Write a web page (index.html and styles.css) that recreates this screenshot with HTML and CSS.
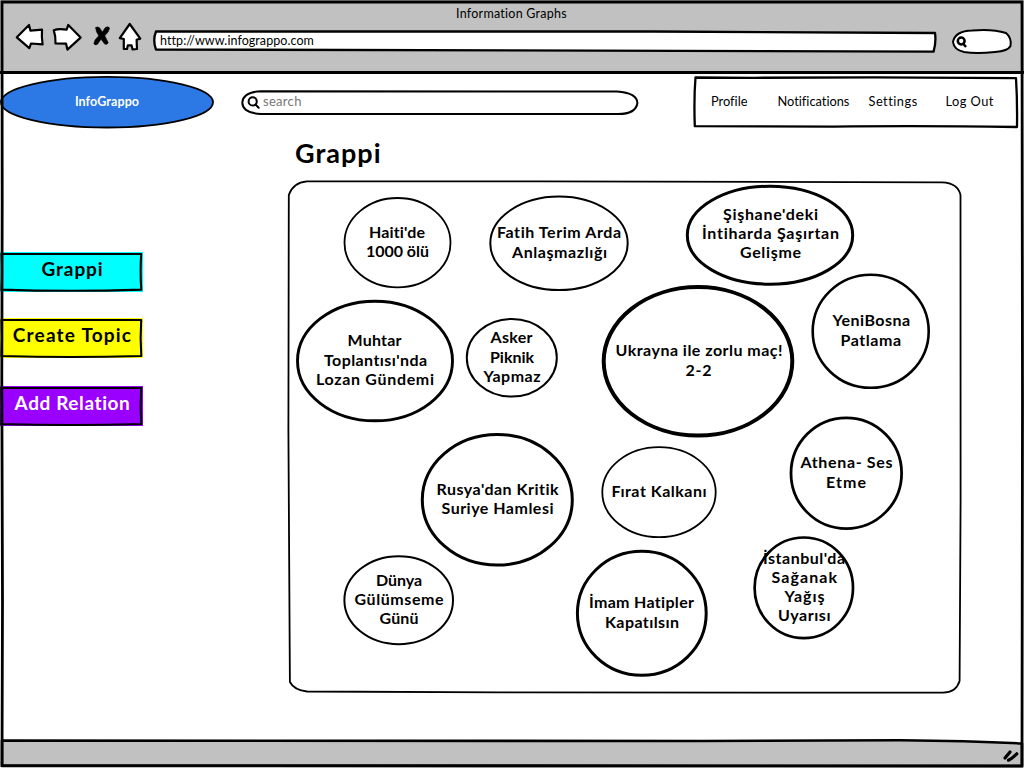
FILE: index.html
```html
<!DOCTYPE html>
<html lang="tr">
<head>
<meta charset="utf-8">
<title>Information Graphs</title>
<link rel="stylesheet" href="styles.css">
</head>
<body>
<div class="window">
  <header class="chrome">
    <div class="window-title">Information Graphs</div>
    <div class="toolbar">
      <svg class="nav-icons" width="130" height="32" viewBox="14 21 130 32">
        <path d="M16.8 37.3 L29 25 L30.4 30.6 L42 29.7 Q41.5 37 42.6 44.3 L31 43.5 L29.3 48.2 Z"/>
        <path d="M53.8 30.3 Q58 28.5 66.6 29.6 L68.3 25 L80.6 37.6 L67.4 49.6 L66 43.6 L55.5 43.4 Q55.8 36 53.8 30.3 Z"/>
        <path class="solid" d="M95.5 27.5 Q98 26 100 28.2 L102.3 32 L105.3 27.5 Q108 25.8 109.7 28 Q109 32 104.8 35.7 L108.3 42.8 Q107 45.2 104.6 44 L101 39.2 L97.5 44.3 Q95 46 93.8 43.4 Q94.5 39.5 98.7 35.8 Q95.8 31.5 95.5 27.5 Z"/>
        <path d="M119.8 38.2 L129.7 24 L140.3 38.6 L136.6 39.8 L137 49 L132.6 49.4 L131.6 45.4 L127.8 45.4 L127 49 L123.8 49 L123.8 39 Z"/>
      </svg>
      <div class="address">
        <svg class="sketch" viewBox="0 0 784 22"><path d="M3 1.5 Q300 .5 500 1.5 T782 3 Q783.3 12 780.6 21.6 Q400 20.5 3 19.5 Q-.5 10 3 1.5 Z"/></svg>
        <span class="address-text">http://www.infograppo.com</span>
      </div>
      <div class="quick-search">
        <svg class="sketch" viewBox="0 0 60 26"><path d="M1 13 Q3 2 20 1.5 Q40 -.5 54 4 Q60 9 58.5 17 Q56 22 43 23 Q24 25 12 23 Q2 21 1 13 Z"/><circle class="line" cx="9.2" cy="12" r="3.4"/><path class="line" d="M11 14.5 L14 18"/></svg>
      </div>
    </div>
  </header>

  <section class="page">
    <div class="topbar">
      <div class="brand">
        <svg class="sketch" viewBox="0 0 214 54"><ellipse cx="107" cy="27.2" rx="106" ry="25.3"/></svg>
        <span>InfoGrappo</span>
      </div>
      <div class="search">
        <svg class="sketch" viewBox="0 0 398 26"><path d="M20 1.3 Q210 1 376 1.6 Q396 3 396.4 13 Q395 24 377 24 L20 24 Q1.4 23 1.3 12.5 Q2 2 20 1.3 Z"/></svg>
        <svg class="magnifier" width="14" height="14" viewBox="0 0 14 14"><circle cx="5.7" cy="5.4" r="4.1"/><path d="M8.5 8.5 L11.7 11.8"/></svg>
        <span>search</span>
      </div>
      <nav class="menu">
        <svg class="sketch" viewBox="0 0 324 52"><path d="M1.5 1.5 L60 1.8 L180 1.3 L322 2.2 Q323.4 24 323 51 Q220 49.6 140 50.7 L.8 50.2 Q-.2 22 1.5 1.5 Z"/></svg>
        <a class="m-profile">Profile</a><a class="m-notifications">Notifications</a><a class="m-settings">Settings</a><a class="m-logout">Log Out</a>
      </nav>
    </div>

    <div class="body">
      <aside class="actions">
        <div class="action cyan"><svg class="sketch" viewBox="0 0 143 40"><path d="M1.5 2 L141.2 2 Q140 20 141.3 37.6 Q70 40 1.5 37.6 Q2.6 20 1.5 2 Z"/></svg><span class="a-grappi">Grappi</span></div>
        <div class="action yellow"><svg class="sketch" viewBox="0 0 143 40"><path d="M1.5 2 L141.2 2 Q140 20 141.3 38 Q70 40 1.5 38 Q2.6 20 1.5 2 Z"/></svg><span class="a-create">Create Topic</span></div>
        <div class="action purple"><svg class="sketch" viewBox="0 0 143 40"><path d="M1.5 2 L141.2 2 Q140 20 141.3 38 Q70 40 1.5 38 Q2.6 20 1.5 2 Z"/></svg><span class="a-add">Add Relation</span></div>
      </aside>
      <main class="board">
        <h1>Grappi</h1>
        <svg class="graph" width="676" height="516" viewBox="287 179 676 516">
          <path class="frame" d="M307 181.3 L540 181.3 L942 182.3 Q958 183 960.5 195 L960.6 500 L959.6 681 Q956 692.5 943 692.7 L500 692.3 L307 691.5 Q294 690 289.9 682 L288.4 430 L288.8 195 Q293 182.5 307 181.3 Z"/>
          <g class="topic">
            <ellipse cx="397.5" cy="242.7" rx="53" ry="44.7" stroke-width="1.8"/>
            <text x="369" y="237.5" textLength="56">Haiti'de</text>
            <text x="366" y="256.8" textLength="63">1000 ölü</text>
          </g>
          <g class="topic">
            <ellipse cx="559" cy="243.3" rx="68.7" ry="46.7" stroke-width="2"/>
            <text x="497" y="237.5" textLength="124">Fatih Terim Arda</text>
            <text x="512" y="257.5" textLength="95">Anlaşmazlığı</text>
          </g>
          <g class="topic">
            <ellipse cx="770" cy="235.2" rx="82.7" ry="49" stroke-width="3"/>
            <text x="723" y="220.2" textLength="95">Şişhane'deki</text>
            <text x="702" y="239.3" textLength="137">İntiharda Şaşırtan</text>
            <text x="740" y="258.3" textLength="61">Gelişme</text>
          </g>
          <g class="topic">
            <ellipse cx="870.7" cy="331.3" rx="58" ry="56.5" stroke-width="2.6"/>
            <text x="832.5" y="325.5" textLength="77.5">YeniBosna</text>
            <text x="840.5" y="345.5" textLength="60.5">Patlama</text>
          </g>
          <g class="topic">
            <ellipse cx="698" cy="361.3" rx="94.3" ry="74.2" stroke-width="4"/>
            <text x="615.5" y="356" textLength="167">Ukrayna ile zorlu maç!</text>
            <text x="685.5" y="376" textLength="26">2-2</text>
          </g>
          <g class="topic">
            <ellipse cx="375" cy="361" rx="77.5" ry="59.8" stroke-width="2.9"/>
            <text x="347.5" y="345.5" textLength="54">Muhtar</text>
            <text x="324" y="365.5" textLength="103">Toplantısı'nda</text>
            <text x="316" y="384.5" textLength="118">Lozan Gündemi</text>
          </g>
          <g class="topic">
            <ellipse cx="511.8" cy="357.8" rx="45" ry="38.8" stroke-width="2"/>
            <text x="490.5" y="343" textLength="42">Asker</text>
            <text x="490" y="362.5" textLength="44">Piknik</text>
            <text x="483.5" y="382" textLength="57">Yapmaz</text>
          </g>
          <g class="topic">
            <ellipse cx="497.3" cy="499.8" rx="75" ry="65.3" stroke-width="3"/>
            <text x="436.5" y="494.5" textLength="122">Rusya'dan Kritik</text>
            <text x="441.5" y="513.7" textLength="112">Suriye Hamlesi</text>
          </g>
          <g class="topic">
            <ellipse cx="659" cy="492.2" rx="56.7" ry="45" stroke-width="1.8"/>
            <text x="611.5" y="496.7" textLength="95">Fırat Kalkanı</text>
          </g>
          <g class="topic">
            <ellipse cx="846.3" cy="473.2" rx="55.3" ry="55.4" stroke-width="2.8"/>
            <text x="800.5" y="467.7" textLength="92">Athena- Ses</text>
            <text x="826" y="487.5" textLength="40">Etme</text>
          </g>
          <g class="topic">
            <ellipse cx="803.8" cy="587.8" rx="49.2" ry="50.3" stroke-width="2.7"/>
            <text x="763" y="563.7" textLength="82">İstanbul'da</text>
            <text x="771.5" y="582.7" textLength="65.5">Sağanak</text>
            <text x="784.5" y="601.7" textLength="40">Yağış</text>
            <text x="778" y="620.7" textLength="52.5">Uyarısı</text>
          </g>
          <g class="topic">
            <ellipse cx="641.8" cy="613.3" rx="64.4" ry="62" stroke-width="3"/>
            <text x="589" y="607.5" textLength="105">İmam Hatipler</text>
            <text x="605" y="627.5" textLength="74">Kapatılsın</text>
          </g>
          <g class="topic">
            <ellipse cx="398.7" cy="600.2" rx="54.3" ry="44" stroke-width="2"/>
            <text x="376" y="585.5" textLength="46">Dünya</text>
            <text x="354.5" y="604.5" textLength="89">Gülümseme</text>
            <text x="379.5" y="623.5" textLength="39">Günü</text>
          </g>
        </svg>
      </main>
    </div>
  </section>

  <footer class="status">
    <svg class="sketch" viewBox="0 0 1024 30"><path d="M2 2.5 L700 3 L900 2.3 Q970 3 1022 5.5 L1022 28 L2 28 Z"/></svg>
    <svg class="grip" width="18" height="14" viewBox="0 0 18 14"><path d="M3 9 L8 3 M6.5 11.2 Q10 9.5 14.8 4.8"/></svg>
  </footer>
  <svg class="window-frame" viewBox="0 0 1024 768"><path d="M2 2 L1022 2 L1022.5 400 L1022 766 L2 765.5 L2.5 600 L1.8 380 L2.2 200 Z"/></svg>
</div>
</body>
</html>
```
FILE: styles.css
```css
* { box-sizing: border-box; }

body {
  margin: 0;
  background: #fff;
  color: #000;
  font-family: Lato, "Open Sans", sans-serif;
  font-variant-ligatures: none;
}

.window {
  position: relative;
  display: flex;
  flex-direction: column;
  width: 1024px;
  height: 768px;
  overflow: hidden;
}

.window-frame {
  position: absolute;
  inset: 0;
  fill: none;
  stroke: #000;
  stroke-width: 2.8;
  pointer-events: none;
}

.sketch {
  position: absolute;
  inset: 0;
  width: 100%;
  height: 100%;
  overflow: visible;
  fill: #fff;
  stroke: #000;
  stroke-width: 2;
  stroke-linejoin: round;
}

.sketch ~ * { position: relative; }

.chrome {
  height: 74px;
  padding-top: 5px;
  background: #c1c1c1;
  border-bottom: 3px solid #000;
}

.window-title {
  height: 17px;
  padding-right: 1px;
  text-align: center;
  font-size: 12.5px;
  line-height: 17px;
  letter-spacing: 0.25px;
}

.toolbar {
  display: flex;
  align-items: flex-start;
  padding-left: 14px;
}

.nav-icons {
  margin-top: -1px;
  fill: #fff;
  stroke: #000;
  stroke-width: 2.2;
  stroke-linejoin: round;
}

.nav-icons .solid { fill: #000; stroke-width: 0.5; }

.address {
  position: relative;
  width: 784px;
  height: 22px;
  margin: 8px 0 0 9px;
  padding-left: 7px;
  font-size: 12.5px;
  line-height: 21px;
}

.address .sketch { stroke-width: 2.3; }
.address-text { letter-spacing: 0.07px; }

.quick-search {
  position: relative;
  width: 60px;
  height: 26px;
  margin: 7px 0 0 15px;
}

.quick-search .line { stroke-width: 2.5; }

.page {
  display: flex;
  flex: 1;
  flex-direction: column;
}

.topbar {
  display: flex;
  height: 56px;
}

.brand {
  position: relative;
  width: 214px;
  height: 54px;
  margin-top: 1px;
  color: #fff;
  text-align: center;
  font-size: 12.5px;
  font-weight: 700;
  line-height: 53px;
}

.brand .sketch { fill: #2c78e4; stroke-width: 1.8; }
.brand span { letter-spacing: 0.1px; }

.search {
  position: relative;
  display: flex;
  width: 398px;
  height: 26px;
  margin: 16px 0 0 27px;
  padding-left: 6px;
  color: #777;
  font-size: 13px;
  line-height: 23px;
  letter-spacing: 0.3px;
}

.search .magnifier {
  margin: 6px 2px 0 0;
  fill: none;
  stroke: #000;
  stroke-width: 2;
  stroke-linecap: round;
}

.menu {
  position: relative;
  display: flex;
  width: 324px;
  height: 52px;
  margin: 2px 0 0 55px;
  padding-left: 17px;
  font-size: 12.8px;
  line-height: 51px;
}

.menu .sketch { stroke-width: 2.3; }
.menu a { white-space: nowrap; }
.m-profile { width: 66.5px; }
.m-notifications { width: 91px; }
.m-settings { width: 77px; letter-spacing: 0.5px; }
.m-logout { letter-spacing: 0.45px; }

.body { display: flex; }

.actions {
  display: flex;
  flex-direction: column;
  gap: 26px;
  width: 287px;
  padding-top: 122px;
}

.action {
  position: relative;
  width: 143px;
  height: 40px;
  text-align: center;
  font-size: 19px;
  font-weight: 700;
  line-height: 34px;
  white-space: nowrap;
}

.action:last-child { margin-top: 2px; }
.action .sketch { fill: none; stroke-width: 2.1; }
.action span { left: 1px; }
.cyan { background: #0ff; }
.yellow { background: #ff0; }
.purple { background: #90f; color: #fff; }
.a-grappi { letter-spacing: 0.9px; }
.a-create { letter-spacing: 1.2px; }
.a-add { letter-spacing: 0.6px; }

.board h1 {
  height: 49px;
  margin: 0;
  padding: 5px 0 0 8px;
  font-size: 27px;
  font-weight: 700;
  line-height: 36px;
  letter-spacing: 1px;
}

.graph { display: block; }

.frame { fill: #fff; stroke: #000; stroke-width: 1.8; }

.topic ellipse { fill: #fff; stroke: #000; }

.topic text {
  font-size: 16px;
  font-weight: 700;
}

.status {
  position: relative;
  flex: none;
  height: 30px;
}

.status .sketch { fill: #c1c1c1; stroke-width: 2.6; }

.status .grip {
  position: absolute;
  right: 4px;
  bottom: 5px;
  fill: none;
  stroke: #000;
  stroke-width: 3.2;
  stroke-linecap: round;
}
```
